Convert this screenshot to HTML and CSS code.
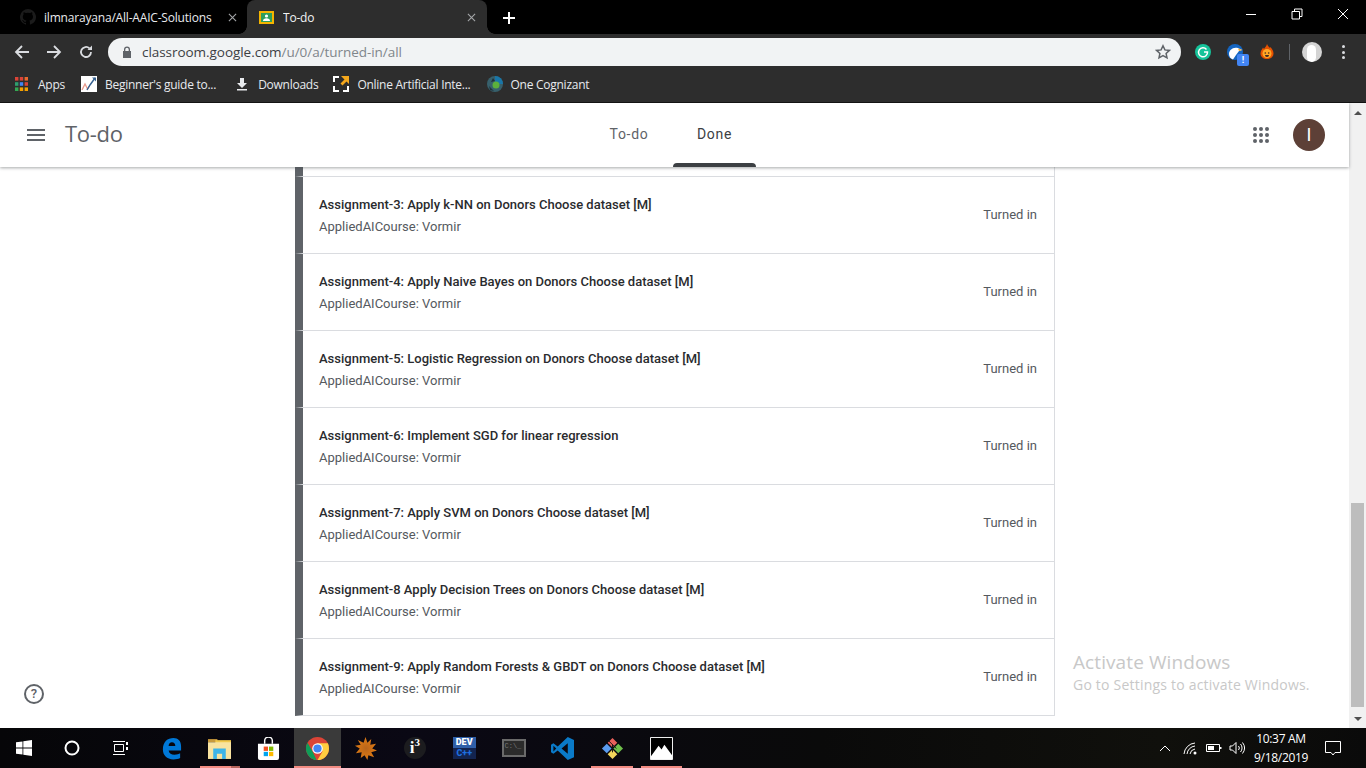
FILE: index.html
```html
<!DOCTYPE html>
<html lang="en">
<head>
<meta charset="utf-8">
<title>To-do</title>
<link rel="stylesheet" href="styles.css">
</head>
<body>
<div class="tabstrip">
  <div class="tab tab-inactive">
    <svg class="fav" viewBox="0 0 16 16"><path fill="#1b1b1b" d="M8 0a8 8 0 0 0-2.500 15.600c.4.100.5-.2.5-.4v-1.400c-2.200.5-2.700-1-2.700-1-.4-.9-.9-1.200-.9-1.200-.7-.5.1-.5.1-.5.8.1 1.200.8 1.200.8.7 1.200 1.900.9 2.300.7.1-.5.3-.9.5-1.100-1.800-.2-3.700-.9-3.700-4 0-.9.300-1.600.8-2.100-.1-.2-.4-1 .1-2.100 0 0 .7-.2 2.200.8a7.600 7.600 0 0 1 4 0c1.500-1 2.200-.8 2.200-.8.400 1.100.2 1.900.1 2.100.5.600.8 1.300.8 2.100 0 3.100-1.900 3.800-3.700 4 .3.300.6.800.6 1.500v2.200c0 .2.100.5.600.4A8 8 0 0 0 8 0z"/></svg>
    <span class="tab-title">ilmnarayana/All-AAIC-Solutions</span>
    <svg class="tab-x" viewBox="0 0 10 10"><path d="M1 1l8 8M9 1l-8 8"/></svg>
  </div>
  <div class="tab tab-active">
    <svg class="fav fav-cls" viewBox="0 0 15 13"><rect x="1" y="1" width="13" height="11" fill="#2e9e5b" stroke="#f4b400" stroke-width="2"/><circle cx="7.500" cy="5" r="1.600" fill="#fff"/><path fill="#fff" d="M4 10c0-1.800 1.500-2.800 3.500-2.800S11 8.200 11 10z"/></svg>
    <span class="tab-title">To-do</span>
    <svg class="tab-x" viewBox="0 0 10 10"><path d="M1 1l8 8M9 1l-8 8"/></svg>
  </div>
  <svg class="newtab" viewBox="0 0 12 12"><path d="M6 0v12M0 6h12"/></svg>
  <div class="winctl">
    <svg viewBox="0 0 12 12"><path d="M1 6.500h10"/></svg>
    <svg viewBox="0 0 12 12"><path d="M1 3.500h7.500v7.500H1zM3.500 3.500V1H11v7.500H8.500"/></svg>
    <svg viewBox="0 0 12 12"><path d="M1 1l10 10M11 1L1 11"/></svg>
  </div>
</div>
<div class="toolbar">
  <svg class="navicon" viewBox="0 0 16 16"><path d="M15 8H2M8 2L2 8l6 6"/></svg>
  <svg class="navicon" viewBox="0 0 16 16"><path d="M1 8h13M8 2l6 6-6 6"/></svg>
  <svg class="navicon" viewBox="0 0 16 16"><path d="M13 8a5 5 0 1 1-1.500-3.600"/><path class="solid" d="M9.500 6H14V1.500z"/></svg>
  <div class="omnibox">
    <svg class="lock" viewBox="0 0 10 12"><path d="M2 5V3.500a3 3 0 0 1 6 0V5h1v7H1V5zm1.300 0h3.400V3.500a1.700 1.700 0 0 0-3.400 0z"/></svg>
    <span class="url"><span class="url-host">classroom.google.com</span>/u/0/a/turned-in/all</span>
    <svg class="star" viewBox="0 0 16 16"><path d="M8 1.800l1.900 4.100 4.500.5-3.300 3 .9 4.500L8 11.700l-4 2.200.9-4.500-3.300-3 4.500-.5z"/></svg>
  </div>
  <div class="ext-row">
    <span class="ext-grammarly"><svg viewBox="0 0 16 16"><path d="M11.500 5.500A4.500 4.500 0 1 0 12.500 8H9"/></svg></span>
    <span class="ext-eagle">
      <svg viewBox="0 0 16 16"><circle cx="8" cy="8" r="8" fill="#1565c0"/><path fill="#fff" d="M2 10c0-4 4-7.500 9-6l4 2-3 1-3 4-3 4.500C4 15 2 13 2 10z"/><path fill="#f9a825" d="M11 4.500l4.500 1.500-3.500 1z"/></svg>
      <span class="ext-badge">!</span>
    </span>
    <svg class="ext-fire" viewBox="0 0 16 16"><path fill="#e65100" d="M8 0c1 2.500 2 3 3 4l.5-1c1.500 2 3 3.500 3 6.500C14.500 13 11.500 15 8 15s-6.500-2-6.500-5.500c0-2.500 1.500-4 2.500-6l1 1.500C6 3.500 7.500 2 8 0z"/><circle cx="8" cy="9.500" r="4.500" fill="#ffa726"/><circle cx="6.300" cy="9" r=".8" fill="#3e2723"/><circle cx="9.700" cy="9" r=".8" fill="#3e2723"/><path fill="#3e2723" d="M6 11h4a2 2 0 0 1-4 0z"/></svg>
    <span class="ext-sep"></span>
    <span class="profile"><span class="profile-head"></span></span>
    <span class="kebab"><i></i><i></i><i></i></span>
  </div>
</div>
<div class="bookmarks">
  <div class="bm">
    <svg class="bm-ic" viewBox="0 0 13 14"><g><rect x="0" y="0" width="3.400" height="3.600" fill="#db4437"/><rect x="4.800" y="0" width="3.400" height="3.600" fill="#db4437"/><rect x="9.600" y="0" width="3.400" height="3.600" fill="#ea6a2f"/><rect x="0" y="5.200" width="3.400" height="3.600" fill="#2f9e6e"/><rect x="4.800" y="5.200" width="3.400" height="3.600" fill="#4285f4"/><rect x="9.600" y="5.200" width="3.400" height="3.600" fill="#db4437"/><rect x="0" y="10.400" width="3.400" height="3.600" fill="#34a853"/><rect x="4.800" y="10.400" width="3.400" height="3.600" fill="#f4a000"/><rect x="9.600" y="10.400" width="3.400" height="3.600" fill="#f4a000"/></g></svg>
    <span>Apps</span>
  </div>
  <div class="bm">
    <svg class="bm-ic bm-w16" viewBox="0 0 16 16"><rect width="16" height="16" fill="#fff"/><path d="M1 14l3-6 2.500 5 2-3" fill="none" stroke="#e89a8c" stroke-width="1.300"/><path d="M6 14l3-5 5-7" fill="none" stroke="#35608f" stroke-width="1.400"/><path d="M11 1.500h4v4z" fill="#35608f"/></svg>
    <span>Beginner's guide to...</span>
  </div>
  <div class="bm bm-dl">
    <svg class="bm-ic bm-w12" viewBox="0 0 12 14"><path fill="#e8eaed" d="M4 1h4v5h3L6 11 1 6h3zM1 12h10v1.500H1z"/></svg>
    <span>Downloads</span>
  </div>
  <div class="bm">
    <svg class="bm-ic bm-w16" viewBox="0 0 16 16"><path fill="none" stroke="#fff" stroke-width="2" d="M6 1H1v5M1 10v5h5M10 15h5v-5"/><path fill="#f5a81c" d="M8 0h8v8l-2.500-2.500-4 4-2-2 4-4z"/></svg>
    <span>Online Artificial Inte...</span>
  </div>
  <div class="bm">
    <svg class="bm-ic bm-w16" viewBox="0 0 16 16"><circle cx="8" cy="8" r="8" fill="#37606c"/><path fill="#1976a8" d="M8 0a8 8 0 0 1 8 8H8z"/><circle cx="9" cy="9" r="3.500" fill="#5cb03c"/><path fill="#20323a" d="M2 10l5 5-4-1zM6 2l2 3-4 1z"/></svg>
    <span>One Cognizant</span>
  </div>
</div>
<div class="viewport">
  <div class="page">
    <header class="appbar">
      <svg class="burger" viewBox="0 0 18 12"><path d="M0 0h18v2H0zM0 5h18v2H0zM0 10h18v2H0z"/></svg>
      <div class="appbar-title">To-do</div>
      <nav class="appbar-tabs">
        <a class="apptab">To-do</a>
        <a class="apptab apptab-on">Done</a>
      </nav>
      <svg class="apps" viewBox="0 0 16 16"><g><circle cx="2" cy="2" r="2"/><circle cx="8" cy="2" r="2"/><circle cx="14" cy="2" r="2"/><circle cx="2" cy="8" r="2"/><circle cx="8" cy="8" r="2"/><circle cx="14" cy="8" r="2"/><circle cx="2" cy="14" r="2"/><circle cx="8" cy="14" r="2"/><circle cx="14" cy="14" r="2"/></g></svg>
      <div class="avatar">I</div>
    </header>
    <main class="list-wrap">
      <div class="list">
        <div class="list-stub"></div>
        <div class="row"><div class="row-text"><div class="row-title">Assignment-3: Apply k-NN on Donors Choose dataset [M]</div><div class="row-sub">AppliedAICourse: Vormir</div></div><div class="row-status">Turned in</div></div>
        <div class="row"><div class="row-text"><div class="row-title">Assignment-4: Apply Naive Bayes on Donors Choose dataset [M]</div><div class="row-sub">AppliedAICourse: Vormir</div></div><div class="row-status">Turned in</div></div>
        <div class="row"><div class="row-text"><div class="row-title">Assignment-5: Logistic Regression on Donors Choose dataset [M]</div><div class="row-sub">AppliedAICourse: Vormir</div></div><div class="row-status">Turned in</div></div>
        <div class="row"><div class="row-text"><div class="row-title">Assignment-6: Implement SGD for linear regression</div><div class="row-sub">AppliedAICourse: Vormir</div></div><div class="row-status">Turned in</div></div>
        <div class="row"><div class="row-text"><div class="row-title">Assignment-7: Apply SVM on Donors Choose dataset [M]</div><div class="row-sub">AppliedAICourse: Vormir</div></div><div class="row-status">Turned in</div></div>
        <div class="row"><div class="row-text"><div class="row-title">Assignment-8 Apply Decision Trees on Donors Choose dataset [M]</div><div class="row-sub">AppliedAICourse: Vormir</div></div><div class="row-status">Turned in</div></div>
        <div class="row row-last"><div class="row-text"><div class="row-title">Assignment-9: Apply Random Forests &amp; GBDT on Donors Choose dataset [M]</div><div class="row-sub">AppliedAICourse: Vormir</div></div><div class="row-status">Turned in</div></div>
      </div>
    </main>
    <div class="help">?</div>
    <div class="watermark">
      <div class="wm-1">Activate Windows</div>
      <div class="wm-2">Go to Settings to activate Windows.</div>
    </div>
  </div>
  <div class="scrollbar">
    <span class="sb-up"></span>
    <div class="sb-track"><div class="sb-thumb"></div></div>
    <span class="sb-down"></span>
  </div>
</div>
<footer class="taskbar">
  <div class="tb-item tb-sys"><svg viewBox="0 0 16 16"><path fill="#fff" d="M0 2.300l6.500-.9v6.200H0zM7.300 1.300L16 0v7.600H7.300zM0 8.400h6.500v6.200L0 13.700zM7.300 8.400H16V16l-8.700-1.200z"/></svg></div>
  <div class="tb-item tb-sys"><svg viewBox="0 0 16 16"><circle cx="8" cy="8" r="6.500" fill="none" stroke="#fff" stroke-width="2"/></svg></div>
  <div class="tb-item tb-sys"><svg viewBox="0 0 16 16"><path fill="none" stroke="#fff" d="M2.500 4.500h9v7h-9zM1 1.500h12M1 14.500h12"/><path fill="#fff" d="M14 2h2v3h-2zM14 7h2v3h-2z"/></svg></div>
  <div class="tb-item tb-pin tb-gap"><svg viewBox="0 0 20 24"><path fill="#0078d7" d="M1 13C1 5 6 1 12 1c5 0 8 3 8 9v4H7c.5 3 3 4.500 6 4.500 2.500 0 5-.8 6-1.500v5c-2 1-4 1.500-7 1.500C5 23 1 19 1 13zm6-3.500h7c0-2.500-1.500-4-3.500-4S7 7 7 9.500z"/></svg></div>
  <div class="tb-item tb-pin tb-run tb-stack"><svg viewBox="0 0 22 20"><path fill="#c99a3c" d="M0 1h9v3H0z"/><path fill="#f2c94c" d="M7 2h15v3H7z"/><path fill="#f9e3a0" d="M0 4h22v16H0z"/><path fill="#3eb4e8" d="M5 10h12v10h-3.500v-5h-5v5H5z"/></svg></div>
  <div class="tb-item tb-pin"><svg viewBox="0 0 22 24"><path fill="none" stroke="#fff" stroke-width="1.500" d="M7 7V4a4 4 0 0 1 8 0v3"/><path fill="#fff" d="M0 7h22v15a2 2 0 0 1-2 2H2a2 2 0 0 1-2-2z"/><path fill="#f25022" d="M6 10h4.500v4.500H6z"/><path fill="#7fba00" d="M11.500 10H16v4.500h-4.500z"/><path fill="#00a4ef" d="M6 15.500h4.500V20H6z"/><path fill="#ffb900" d="M11.500 15.500H16V20h-4.500z"/></svg></div>
  <div class="tb-item tb-active"><svg viewBox="0 0 24 24"><circle cx="12" cy="12" r="12" fill="#db4437"/><path fill="#0f9d58" d="M12 24A12 12 0 0 1 1.600 6L7 15.500l4 8.500z"/><path fill="#ffcd40" d="M24 12a12 12 0 0 1-12 12l5.200-9L12 6.500h10.900c.7 1.700 1.100 3.500 1.100 5.500z"/><circle cx="12" cy="12" r="5.500" fill="#fff"/><circle cx="12" cy="12" r="4.300" fill="#4285f4"/></svg></div>
  <div class="tb-item"><svg viewBox="0 0 24 24"><defs><radialGradient id="burst"><stop offset="0" stop-color="#b9651c"/><stop offset="1" stop-color="#e07a12"/></radialGradient></defs><path fill="url(#burst)" d="M12 0l2 6 4-4-1 6 6-1-4 5 5 2-6 2 3 5-6-2-1 5-3-5-4 3 1-6-6 1 4-5-5-3 6-1-3-5 6 3z"/></svg></div>
  <div class="tb-item"><span class="i3">i<sup class="i3-sup">3</sup></span></div>
  <div class="tb-item"><span class="devcpp"><b>DEV</b><b class="devcpp-c">C++</b></span></div>
  <div class="tb-item"><span class="console">C:\_</span></div>
  <div class="tb-item"><svg viewBox="0 0 24 24"><path fill="#0a7ac8" d="M17.500 0L24 3v18l-6.500 3L7 14l-4.500 3.500L0 16V8l2.500-1.500L7 10zM17.500 6.500L11 12l6.500 5.500zM2.500 9v6L5.500 12z"/></svg></div>
  <div class="tb-item tb-run"><svg viewBox="0 0 24 24"><path fill="#e8605b" d="M12 1l5 5-5 5-5-5z"/><path fill="#5b9cf0" d="M6 7l5 5-5 5-5-5z"/><path fill="#6fbf4a" d="M18 7l5 5-5 5-5-5z"/><path fill="#f3d65c" d="M12 13l5 5-5 5-5-5z"/><path fill="none" stroke="#111" d="M8 4l8 8M12 8v8"/></svg></div>
  <div class="tb-item tb-run"><svg viewBox="0 0 24 24"><path fill="#000" stroke="#fff" d="M.5.500h23v23H.5z"/><path fill="#fff" d="M1 23V20L9 9l3 4 3-5 8 11v4z"/></svg></div>
  <div class="tray">
    <svg class="tray-up" viewBox="0 0 12 7"><path d="M1 6l5-5 5 5"/></svg>
    <svg class="tray-ic tray-wifi" viewBox="0 0 16 14"><path d="M1 13A12 12 0 0 1 12 2M4 13a9 9 0 0 1 8-8M7 13a6 6 0 0 1 5-5"/><circle cx="12" cy="12" r="1.500" fill="#fff" stroke="none"/></svg>
    <svg class="tray-ic tray-batt" viewBox="0 0 16 10"><path d="M.5 1.500h13v7H.5z"/><path class="fill" d="M2 3h6v4H2zM14 4h1.500v2H14z"/></svg>
    <svg class="tray-ic tray-vol" viewBox="0 0 16 14"><path d="M1 5h2.500L7 1.500v11L3.500 9H1zM9.500 5a3 3 0 0 1 0 4M11.500 3a6 6 0 0 1 0 8M13.500 1.500a9 9 0 0 1 0 11"/></svg>
    <div class="clock"><div>10:37 AM</div><div>9/18/2019</div></div>
    <svg class="tray-note" viewBox="0 0 16 16"><path d="M.5 1.500h15v11H10l-2 2.500-2-2.500H.5z"/></svg>
  </div>
</footer>
</body>
</html>
```
FILE: styles.css
```css
* { box-sizing: border-box; }
html, body { margin: 0; height: 100%; }
body {
  width: 1366px;
  height: 768px;
  overflow: hidden;
  display: flex;
  flex-direction: column;
  font-family: Roboto, "Liberation Sans", sans-serif;
  background: #fff;
}

/* tab strip */
.tabstrip {
  height: 34px;
  background: #000;
  display: flex;
  align-items: flex-end;
  padding-left: 12px;
  flex: none;
}
.tab {
  height: 34px;
  display: flex;
  align-items: center;
  font: 12px "Open Sans", sans-serif;
  letter-spacing: -.19px;
  color: #e8eaed;
  flex: none;
}
.tab-inactive { width: 235px; padding-left: 8px; }
.tab-inactive .tab-x { margin-right: 10px; }
.tab-active {
  background: #2d2d2d;
  border-radius: 8px 8px 0 0;
  width: 240px;
  padding-left: 12px;
  color: #f1f3f4;
  position: relative;
}
.tab-active::before, .tab-active::after {
  content: "";
  position: absolute;
  bottom: 0;
  width: 8px;
  height: 8px;
}
.tab-active::before { left: -8px; background: radial-gradient(circle at 0 0, transparent 7.500px, #2d2d2d 8px); }
.tab-active::after { right: -8px; background: radial-gradient(circle at 100% 0, transparent 7.500px, #2d2d2d 8px); }
.fav { width: 16px; height: 16px; flex: none; margin-right: 8px; }
.fav-cls { width: 15px; height: 13px; margin-right: 9px; }
.tab-title { flex: 1; white-space: nowrap; overflow: hidden; }
.tab-x { width: 9px; height: 9px; margin-right: 11px; fill: none; stroke: #a5a7a9; stroke-width: 1.200; flex: none; }
.newtab { width: 12px; height: 12px; margin: 0 0 10px 16px; fill: none; stroke: #fff; stroke-width: 2; flex: none; }
.winctl { margin-left: auto; display: flex; align-self: flex-start; padding-top: 8px; gap: 34px; padding-right: 17px; }
.winctl svg { width: 12px; height: 12px; fill: none; stroke: #fff; stroke-width: 1; }

/* toolbar */
.toolbar {
  height: 34px;
  background: #2d2d2d;
  display: flex;
  align-items: center;
  padding: 2px 0 0 14px;
  flex: none;
}
.navicon { width: 16px; height: 16px; margin-right: 16px; fill: none; stroke: #dadce0; stroke-width: 1.800; flex: none; }
.navicon .solid { fill: #dadce0; stroke: none; }
.omnibox {
  width: 1073px;
  height: 28px;
  margin-left: -2px;
  background: #f1f3f4;
  border-radius: 14px;
  display: flex;
  align-items: center;
  padding: 0 10px 0 14px;
  flex: none;
}
.lock { width: 10px; height: 12px; fill: #5f6368; flex: none; margin-right: 10px; }
.url { flex: 1; font: 13.500px "Open Sans", sans-serif; letter-spacing: -.05px; color: #80868b; white-space: nowrap; }
.url-host { color: #3c4043; }
.star { width: 16px; height: 16px; fill: none; stroke: #5f6368; stroke-width: 1.500; flex: none; }
.ext-row { display: flex; align-items: center; flex: none; position: relative; height: 32px; width: 172px; padding-left: 14px; }
.ext-grammarly { width: 16px; height: 16px; border-radius: 50%; background: #15c39a; display: flex; flex: none; }
.ext-grammarly svg { width: 16px; height: 16px; fill: none; stroke: #fff; stroke-width: 1.500; }
.ext-eagle { width: 16px; height: 16px; margin-left: 16px; position: relative; flex: none; }
.ext-eagle svg { width: 16px; height: 16px; display: block; }
.ext-badge { position: absolute; left: 10px; top: 10px; width: 12px; height: 12px; border-radius: 2px; background: #4285f4; color: #fff; font: bold 9px/12px Roboto, sans-serif; text-align: center; }
.ext-fire { width: 16px; height: 16px; margin-left: 16px; flex: none; }
.ext-sep { width: 1px; height: 16px; background: #5f6368; margin-left: 14px; flex: none; }
.profile { width: 20px; height: 20px; border-radius: 50%; background: #d4d4d4; margin-left: 12px; overflow: hidden; position: relative; flex: none; display: block; }
.profile-head { position: absolute; left: 5px; top: 3px; width: 9px; height: 17px; border-radius: 5px; background: #fff; }
.kebab { display: flex; flex-direction: column; gap: 2.500px; margin-left: 20px; flex: none; }
.kebab i { width: 3px; height: 3px; border-radius: 50%; background: #dadce0; display: block; }

/* bookmarks */
.bookmarks {
  height: 35px;
  background: #2d2d2d;
  border-bottom: 1px solid #111;
  display: flex;
  align-items: center;
  padding: 0 0 2px 15px;
  font: 12px "Open Sans", sans-serif;
  letter-spacing: -.26px;
  color: #e8eaed;
  flex: none;
}
.bm { display: flex; align-items: center; margin-right: 16px; white-space: nowrap; }
.bm-ic { width: 13px; height: 14px; margin-right: 10px; flex: none; }
.bm-w16 { width: 16px; height: 16px; margin-right: 8px; }
.bm-w12 { width: 12px; height: 14px; margin-right: 10px; }
.bm-dl { margin-left: 4px; margin-right: 15px; }

/* page */
.viewport { flex: 1; display: flex; min-height: 0; }
.page { flex: 1; position: relative; display: flex; flex-direction: column; min-width: 0; background: #fff; }
.appbar {
  height: 64px;
  flex: none;
  background: #fff;
  box-shadow: 0 1px 3px rgba(60,64,67,.45);
  display: flex;
  align-items: center;
  padding-left: 27px;
  position: relative;
  z-index: 2;
}
.burger { width: 18px; height: 12px; fill: #5f6368; flex: none; }
.appbar-title { font: 22px "Open Sans", Roboto, sans-serif; letter-spacing: -.3px; color: #5f6368; margin-left: 20px; padding-bottom: 5px; }
.appbar-tabs { position: absolute; left: 591px; top: 0; height: 64px; display: flex; }
.apptab { width: 76px; font: 400 14px/62px Roboto, sans-serif; letter-spacing: .7px; color: #5f6368; text-align: center; margin-right: 6px; position: relative; height: 64px; }
.apptab-on { width: 83px; color: #3c4043; }
.apptab-on::after { content: ""; position: absolute; left: 0; right: 0; bottom: 0; height: 4px; background: #3c4043; border-radius: 4px 4px 0 0; }
.apps { width: 16px; height: 16px; fill: #5f6368; margin-left: auto; flex: none; }
.avatar { width: 32px; height: 32px; margin: 0 24px; border-radius: 50%; background: #5d4037; color: #fff; font: 18px/32px Roboto, sans-serif; text-align: center; flex: none; }

/* list */
.list-wrap { flex: 1; min-height: 0; padding-left: 295px; }
.list { width: 760px; }
.list-stub { height: 9px; border-left: 8px solid #5f6368; border-right: 1px solid #dadce0; }
.row {
  height: 77px;
  border-left: 8px solid #5f6368;
  border-right: 1px solid #dadce0;
  border-top: 1px solid #dadce0;
  display: flex;
  align-items: center;
  padding: 0 17px 0 16px;
}
.row-last { height: 78px; border-bottom: 1px solid #dadce0; }
.row-text { flex: 1; min-width: 0; padding-top: 2px; }
.row-title { font: 500 13px/18px Roboto, sans-serif; color: #2a2b2e; }
.row-sub { font: 400 13px/18px Roboto, sans-serif; color: #55595e; margin-top: 4px; }
.row-status { font: 400 13px/18px Roboto, sans-serif; color: #55595e; }

.help { position: absolute; left: 24px; top: 581px; width: 20px; height: 20px; border: 2px solid #5f6368; border-radius: 50%; color: #5f6368; font: 500 13px/16px Roboto, sans-serif; text-align: center; }
.watermark { position: absolute; left: 1073px; top: 546px; color: #c8c8c8; font-family: "Open Sans", sans-serif; white-space: nowrap; }
.wm-1 { font-size: 19px; line-height: 26px; letter-spacing: .09px; }
.wm-2 { font-size: 14px; line-height: 20px; letter-spacing: .21px; }

/* scrollbar */
.scrollbar { width: 17px; flex: none; background: #f1f1f1; display: flex; flex-direction: column; align-items: center; }
.sb-up, .sb-down { width: 0; height: 0; border-left: 4px solid transparent; border-right: 4px solid transparent; flex: none; }
.sb-up { border-bottom: 4px solid #505050; margin: 8px 0 5px; }
.sb-down { border-top: 4px solid #505050; margin: 6px 0 7px; }
.sb-track { flex: 1; width: 100%; position: relative; }
.sb-thumb { position: absolute; left: 2px; right: 2px; bottom: 4px; top: 383px; background: #bdbdbd; }

/* taskbar */
.taskbar {
  height: 40px;
  flex: none;
  background: linear-gradient(90deg, #060608, #0a0814 30%, #0a0a0a 60%, #10100c 85%, #0a0a0a);
  display: flex;
  align-items: center;
  color: #fff;
}
.tb-item { width: 49.300px; height: 40px; display: flex; align-items: center; justify-content: center; flex: none; position: relative; }
.tb-item svg { width: 23px; height: 23px; }
.tb-sys { width: 48px; }
.tb-sys svg { width: 16px; height: 16px; }
.tb-pin { width: 48.670px; }
.tb-gap { margin-left: 3px; }
.tb-active { background: #3a3a3a; width: 47px; margin-left: 1px; }
.tb-active::after, .tb-run::after { content: ""; position: absolute; left: 0; right: 0; bottom: 0; height: 2px; background: #f28b82; }
.tb-run::after { left: 4px; right: 4px; }
.tb-stack::after { background: linear-gradient(90deg, #f28b82 77%, #b5635c 77%); }
.i3 { width: 22px; height: 22px; border-radius: 50%; background: #1c1c1f; font: 700 17px/22px "Liberation Serif", serif; text-align: center; }
.i3-sup { font-size: 11px; line-height: 0; }
.devcpp { width: 23px; height: 22px; background: linear-gradient(#2f5fa8 50%, #13244f 50%); display: flex; flex-direction: column; align-items: center; font: 700 9px/11px Roboto, sans-serif; color: #fff; }
.devcpp b { display: block; }
.devcpp-c { color: #1e6fe0; }
.console { width: 24px; height: 18px; background: #2b2b2b; border: 2px solid #6a6a6a; font: 7px/10px "Liberation Mono", monospace; color: #777; padding-left: 1px; }
.tray { margin-left: auto; display: flex; align-items: center; height: 40px; padding-right: 25px; }
.tray-up { width: 12px; height: 7px; fill: none; stroke: #fff; stroke-width: 1; margin-right: 12px; }
.tray-ic { fill: none; stroke: #fff; stroke-width: 1; margin-right: 7px; }
.tray-wifi { width: 16px; height: 14px; }
.tray-batt { width: 16px; height: 10px; }
.tray-batt .fill { fill: #fff; stroke: none; }
.tray-vol { width: 16px; height: 14px; }
.clock { font: 12px/19px "Open Sans", sans-serif; letter-spacing: -.3px; color: #fff; text-align: center; margin-left: 2px; width: 54px; white-space: nowrap; }
.tray-note { width: 16px; height: 16px; fill: none; stroke: #fff; stroke-width: 1; margin-left: 17px; }
```
